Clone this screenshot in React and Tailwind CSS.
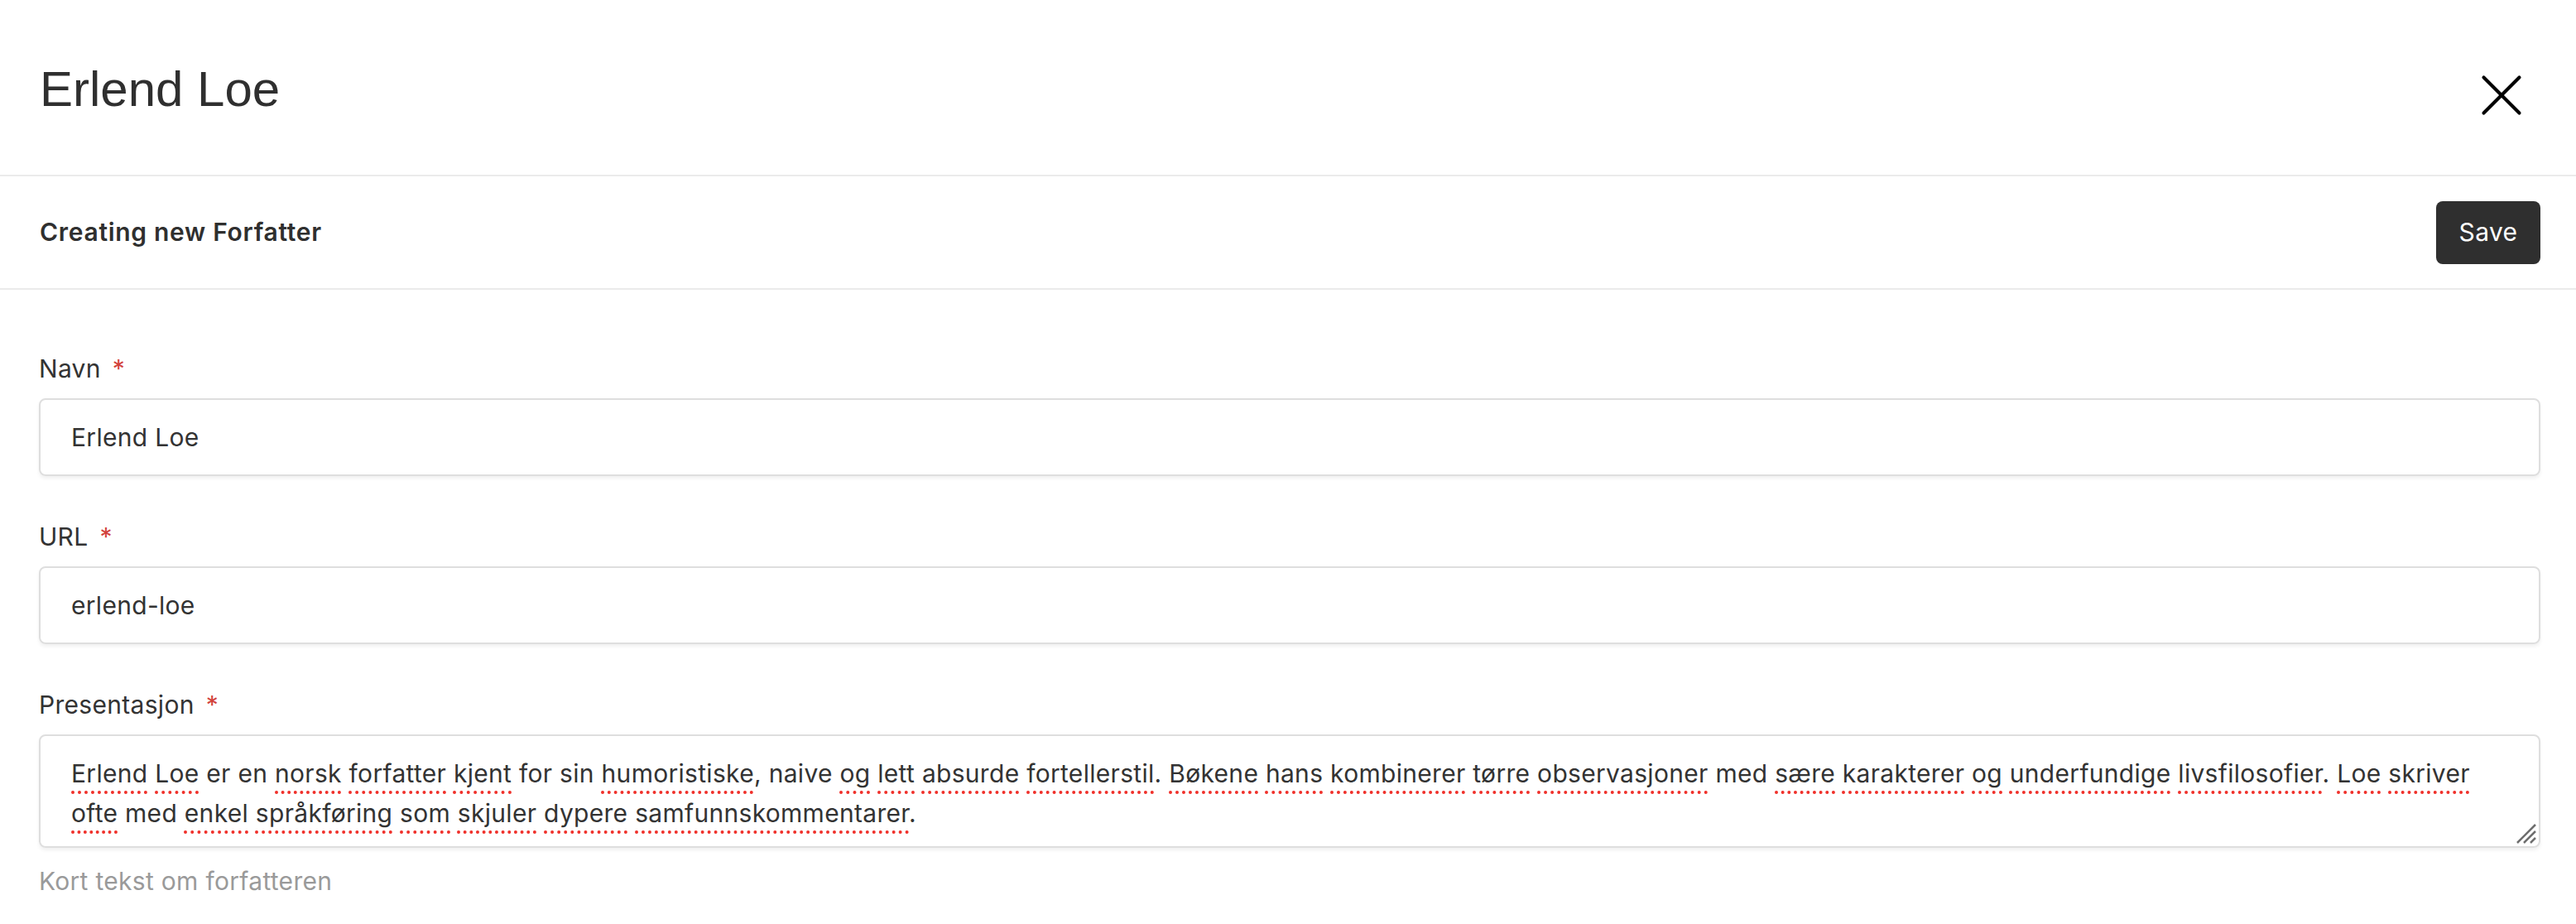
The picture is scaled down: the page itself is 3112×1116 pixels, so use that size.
import { X } from "lucide-react";

const words1 = [
  ["Erlend", true], ["Loe", true], ["er", false], ["en", false], ["norsk", true],
  ["forfatter", true], ["kjent", true], ["for", false], ["sin", false],
  ["humoristiske", true, ","], ["naive", false], ["og", true], ["lett", true],
  ["absurde", true], ["fortellerstil", true, "."], ["Bøkene", true], ["hans", true],
  ["kombinerer", true], ["tørre", true], ["observasjoner", true], ["med", false],
  ["sære", true], ["karakterer", true], ["og", true], ["underfundige", true],
  ["livsfilosofier", true, "."], ["Loe", true], ["skriver", true],
];

const words2 = [
  ["ofte", true], ["med", false], ["enkel", true], ["språkføring", true], ["som", true],
  ["skjuler", true], ["dypere", true], ["samfunnskommentarer", true, "."],
];

function Line({ words }) {
  return (
    <div>
      {words.map(([w, bad, punct], i) => (
        <span key={i}>
          {bad ? (
            <span className="underline decoration-dotted decoration-[#f0302a] decoration-[4px] underline-offset-[10px]">
              {w}
            </span>
          ) : (
            w
          )}
          {punct}
          {i < words.length - 1 ? " " : ""}
        </span>
      ))}
    </div>
  );
}

function Label({ children }) {
  return (
    <div className="flex items-center text-[30px] leading-[48px] tracking-[0.3px] text-[#333] mb-[12px]">
      {children}
      <span className="ml-[14px] text-[#d2413a]">*</span>
    </div>
  );
}

export default function App() {
  return (
    <div className="w-full min-h-screen bg-white font-['Inter',sans-serif] text-[#333]">
      {/* Header */}
      <div className="h-[213px] flex items-center justify-between pl-[48px] pr-[47px] border-b-2 border-[#ebebeb]">
        <h1 className="font-['Liberation_Sans',Arial,sans-serif] text-[60px] text-[#2f2f2f] leading-none mt-[4px]">
          Erlend Loe
        </h1>
        <button className="mt-[18px] text-black">
          <X size={86} strokeWidth={1.15} />
        </button>
      </div>

      {/* Toolbar */}
      <div className="h-[137px] flex items-center justify-between pl-[48px] pr-[43px] border-b-2 border-[#ebebeb]">
        <div className="text-[30px] font-semibold tracking-[0.7px] text-[#2f2f2f]">Creating new Forfatter</div>
        <button className="h-[76px] w-[126px] rounded-[8px] bg-[#2f2f2f] text-white text-[30px] tracking-[0.4px]">Save</button>
      </div>

      {/* Form */}
      <div className="pl-[47px] pr-[43px] pt-[71px]">
        <Label>Navn</Label>
        <div className="h-[94px] flex items-center px-[37px] border-2 border-[#dedede] rounded-[8px] shadow-[0_3px_4px_rgba(0,0,0,0.06)] text-[30px] tracking-[0.3px]">
          Erlend Loe
        </div>

        <div className="mt-[49px]">
          <Label>URL</Label>
          <div className="h-[94px] flex items-center px-[37px] border-2 border-[#dedede] rounded-[8px] shadow-[0_3px_4px_rgba(0,0,0,0.06)] text-[30px] tracking-[0.3px]">
            erlend-loe
          </div>
        </div>

        <div className="mt-[49px]">
          <Label>Presentasjon</Label>
          <div className="relative h-[137px] px-[37px] pt-[21px] border-2 border-[#dedede] rounded-[8px] shadow-[0_3px_4px_rgba(0,0,0,0.06)] text-[30px] leading-[48px] tracking-[0.3px] text-[#333]">
            <Line words={words1} />
            <Line words={words2} />
            <svg className="absolute right-[2px] bottom-[2px]" width="26" height="26" viewBox="0 0 26 26">
              <path d="M2 24 L24 2 M10 24 L24 10 M18 24 L24 18" stroke="#6e6e6e" strokeWidth="2.5" />
            </svg>
          </div>
          <div className="mt-[16px] text-[30px] leading-[48px] tracking-[0.3px] text-[#9a9a9a]">Kort tekst om forfatteren</div>
        </div>
      </div>
    </div>
  );
}
